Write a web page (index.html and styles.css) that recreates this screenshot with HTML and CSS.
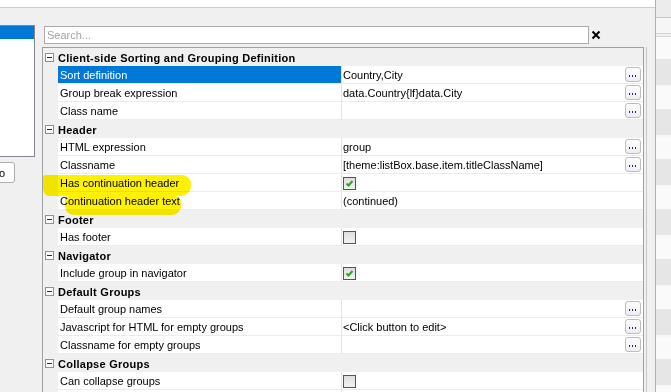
FILE: index.html
```html
<!DOCTYPE html>
<html lang="en">
<head>
    <meta charset="UTF-8">
    <title>Grouping properties</title>
    <link rel="stylesheet" href="styles.css">
</head>
<body>
<div class="window">
    <div class="main">
        <div class="top-strip"></div>
        <div class="workspace">

            <!-- list of groups on the left (cut off) -->
            <div class="left-col">
                <div class="listbox">
                    <div class="list-item selected"></div>
                </div>
                <button class="side-btn">o</button>
            </div>

            <div class="editor">
                <div class="search-row">
                    <input class="search" type="text" placeholder="Search...">
                    <svg class="clear" width="10" height="10" viewBox="0 0 10 10">
                        <path d="M1.5 1.5 L8.5 8.5 M8.5 1.5 L1.5 8.5" stroke="#000" stroke-width="2"/>
                    </svg>
                </div>

                <!-- property grid -->
                <div class="grid">
                    <div class="cat"><span class="toggle"></span>Client-side Sorting and Grouping Definition</div>
                    <div class="prop"><div class="name selected">Sort definition</div><div class="value">Country,City<span class="dots"><svg width="14" height="13"><rect x="3" y="7" width="1" height="2"/><rect x="6" y="7" width="1" height="2"/><rect x="9" y="7" width="1" height="2"/></svg></span></div></div>
                    <div class="prop"><div class="name">Group break expression</div><div class="value">data.Country{lf}data.City<span class="dots"><svg width="14" height="13"><rect x="3" y="7" width="1" height="2"/><rect x="6" y="7" width="1" height="2"/><rect x="9" y="7" width="1" height="2"/></svg></span></div></div>
                    <div class="prop"><div class="name">Class name</div><div class="value"><span class="dots"><svg width="14" height="13"><rect x="3" y="7" width="1" height="2"/><rect x="6" y="7" width="1" height="2"/><rect x="9" y="7" width="1" height="2"/></svg></span></div></div>

                    <div class="cat"><span class="toggle"></span>Header</div>
                    <div class="prop"><div class="name">HTML expression</div><div class="value">group<span class="dots"><svg width="14" height="13"><rect x="3" y="7" width="1" height="2"/><rect x="6" y="7" width="1" height="2"/><rect x="9" y="7" width="1" height="2"/></svg></span></div></div>
                    <div class="prop"><div class="name">Classname</div><div class="value">[theme:listBox.base.item.titleClassName]<span class="dots"><svg width="14" height="13"><rect x="3" y="7" width="1" height="2"/><rect x="6" y="7" width="1" height="2"/><rect x="9" y="7" width="1" height="2"/></svg></span></div></div>
                    <div class="prop"><div class="name">Has continuation header</div><div class="value"><span class="check"><svg width="11" height="11"><path d="M2.5 5.5 L4.5 7.5 L8.5 3"/></svg></span></div></div>
                    <div class="prop"><div class="name">Continuation header text</div><div class="value">(continued)</div></div>

                    <div class="cat"><span class="toggle"></span>Footer</div>
                    <div class="prop"><div class="name">Has footer</div><div class="value"><span class="check"></span></div></div>

                    <div class="cat"><span class="toggle"></span>Navigator</div>
                    <div class="prop"><div class="name">Include group in navigator</div><div class="value"><span class="check"><svg width="11" height="11"><path d="M2.5 5.5 L4.5 7.5 L8.5 3"/></svg></span></div></div>

                    <div class="cat"><span class="toggle"></span>Default Groups</div>
                    <div class="prop"><div class="name">Default group names</div><div class="value"><span class="dots"><svg width="14" height="13"><rect x="3" y="7" width="1" height="2"/><rect x="6" y="7" width="1" height="2"/><rect x="9" y="7" width="1" height="2"/></svg></span></div></div>
                    <div class="prop"><div class="name">Javascript for HTML for empty groups</div><div class="value">&lt;Click button to edit&gt;<span class="dots"><svg width="14" height="13"><rect x="3" y="7" width="1" height="2"/><rect x="6" y="7" width="1" height="2"/><rect x="9" y="7" width="1" height="2"/></svg></span></div></div>
                    <div class="prop"><div class="name">Classname for empty groups</div><div class="value"><span class="dots"><svg width="14" height="13"><rect x="3" y="7" width="1" height="2"/><rect x="6" y="7" width="1" height="2"/><rect x="9" y="7" width="1" height="2"/></svg></span></div></div>

                    <div class="cat"><span class="toggle"></span>Collapse Groups</div>
                    <div class="prop"><div class="name">Can collapse groups</div><div class="value"><span class="check"></span></div></div>
                    <div class="prop"><div class="name"></div><div class="value"></div></div>

                    <!-- highlighter marks -->
                    <div class="marker marker-one"></div>
                    <div class="marker marker-two"></div>
                </div>
            </div>
        </div>
    </div>

    <!-- neighbouring pane (cut off) -->
    <div class="sidepane">
        <div class="band head"></div>
        <div class="band light"></div>
        <div class="band split"></div>
        <div class="band stripes"></div>
    </div>
</div>
</body>
</html>
```

FILE: styles.css
```css
* {
    box-sizing: border-box;
}

body {
    margin: 0;
    font-family: "Liberation Sans", Arial, sans-serif;
    font-size: 11px;
    color: #000;
}

.window {
    width: 671px;
    height: 392px;
    display: flex;
    overflow: hidden;
    background: #f0f0f0;
}

.main {
    width: 655px;
    flex-shrink: 0;
    display: flex;
    flex-direction: column;
}

.top-strip {
    height: 8px;
    flex-shrink: 0;
    background: #fff;
    border-bottom: 1px solid #cdcdcd;
}

.workspace {
    flex: 1;
    display: flex;
    min-height: 0;
}

/* left list */
.left-col {
    width: 35px;
    flex-shrink: 0;
    padding-top: 17px;
}

.listbox {
    height: 132px;
    background: #fff;
    border: 1px solid #828790;
    border-left: none;
}

.list-item {
    height: 13px;
}

.list-item.selected {
    background: #0078d7;
}

.side-btn {
    display: block;
    margin: 5px 0 0 -41px;
    width: 56px;
    height: 21px;
    padding: 0 9px 0 0;
    border: 1px solid #adadad;
    border-radius: 3px;
    background: #fdfdfd;
    font: inherit;
    color: #000;
    text-align: right;
}

/* editor */
.editor {
    flex: 1;
    min-width: 0;
    display: flex;
    flex-direction: column;
}

.search-row {
    display: flex;
    align-items: center;
    gap: 2px;
    margin: 18px 0 0 9px;
}

.search {
    width: 545px;
    height: 18px;
    padding: 0 2px;
    border: 1px solid #a9abb0;
    font: inherit;
    outline: none;
}

.search::placeholder {
    color: #a3a3a3;
}

.clear {
    display: block;
}

.grid {
    position: relative;
    flex: 1;
    width: 602px;
    margin: 3px 0 0 7px;
    border: 1px solid #a0a0a0;
    border-bottom: none;
    box-shadow: 2px 0 0 #f0f0f0, 3px 0 0 #c9c9c9;
    background: #f0f0f0;
}

.cat {
    height: 18px;
    display: flex;
    align-items: center;
    padding: 1px 0 0 2px;
    font-weight: bold;
    letter-spacing: 0.25px;
}

.toggle {
    position: relative;
    width: 9px;
    height: 9px;
    margin: -1px 4px 0 0;
    border: 1px solid #919191;
    background: #fff;
}

.toggle::after {
    content: "";
    position: absolute;
    left: 1px;
    top: 3px;
    width: 5px;
    height: 1px;
    background: #2b2b2b;
}

.prop {
    height: 18px;
    display: flex;
    padding-left: 15px;
}

.name {
    width: 283px;
    padding: 1px 0 0 2px;
    line-height: 16px;
    white-space: nowrap;
    background: #fff;
    border-bottom: 1px solid #ececec;
}

.name.selected {
    background: #0078d7;
    color: #fff;
}

.value {
    flex: 1;
    display: flex;
    align-items: center;
    padding: 1px 0 0 1px;
    white-space: nowrap;
    background: #fff;
    border-left: 1px solid #e3e3e3;
    border-bottom: 1px solid #ececec;
}

.dots {
    margin: -1px 2px 0 auto;
    width: 16px;
    height: 15px;
    border: 1px solid #bdbdbd;
    border-radius: 3px;
    background: linear-gradient(#fdfdfd, #eeeeee);
}

.dots svg {
    display: block;
    fill: #23237a;
}

.check {
    width: 13px;
    height: 13px;
    border: 1px solid #2c5e8f;
    background: linear-gradient(#dedede, #f2f2f2);
}

.check svg {
    display: block;
    fill: none;
    stroke: #32a02e;
    stroke-width: 2;
}

/* yellow highlighter strokes */
.marker {
    position: absolute;
    background: #fff200;
    mix-blend-mode: multiply;
}

.marker-one {
    left: 0;
    top: 127px;
    width: 148px;
    height: 21px;
    border-radius: 2px 9px 10px 6px / 3px 9px 10px 8px;
}

.marker-two {
    left: 22px;
    top: 148px;
    width: 116px;
    height: 19px;
    border-radius: 4px 6px 9px 10px / 3px 6px 9px 8px;
}

/* neighbouring pane */
.sidepane {
    flex: 1;
    border-left: 1px solid #b0b0b0;
    display: flex;
    flex-direction: column;
}

.band.head {
    height: 18px;
    background: #ececec;
    border-bottom: 1px solid #c6c6c6;
}

.band.light {
    height: 16px;
    background: #f6f6f6;
    border-bottom: 1px solid #d4d4d4;
}

.band.split {
    height: 3px;
    background: #f0f0f0;
    border-bottom: 1px solid #d4d4d4;
}

.band.stripes {
    flex: 1;
    background: repeating-linear-gradient(to bottom,
        #fafafa 0, #fafafa 22px,
        #e6e6e6 22px, #e6e6e6 48px,
        #f7f7f7 48px, #f7f7f7 50px);
}
```
